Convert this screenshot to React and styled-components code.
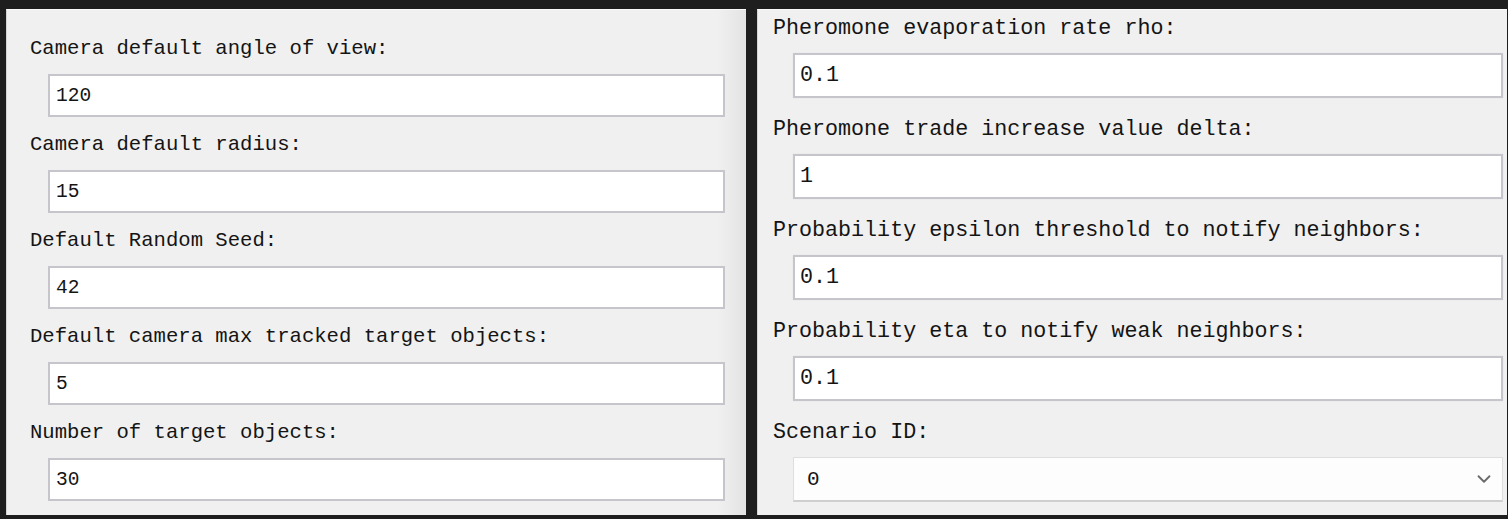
import styled, { createGlobalStyle } from "styled-components";
import { ChevronDown } from "lucide-react";

const GlobalStyle = createGlobalStyle`
  html, body {
    margin: 0;
    padding: 0;
    background: #1e1e1e;
  }
  * { box-sizing: border-box; }
`;

const Screen = styled.div`
  width: 1508px;
  height: 519px;
  display: flex;
  gap: 11px;
  padding: 9px 1px 4px 6px;
  background: #1e1e1e;
  overflow: hidden;
`;

const Panel = styled.div`
  width: ${(p) => p.$width}px;
  display: flex;
  flex-direction: column;
  gap: ${(p) => p.$gap}px;
  padding: ${(p) => p.$pad};
  background: ${(p) =>
    p.$shade
      ? "linear-gradient(to right, #f0f0f0 calc(100% - 28px), #e3e3e3)"
      : "#f0f0f0"};
  border-left: 1px solid #d4d4d4;
  border-top: 1px solid #fafafa;
  font-family: "Liberation Mono", "DejaVu Sans Mono", monospace;
  color: #141414;
`;

const Field = styled.div`
  display: flex;
  flex-direction: column;
`;

const Label = styled.div`
  font-size: ${(p) => p.$size}px;
  line-height: ${(p) => p.$lh}px;
  height: ${(p) => p.$lh}px;
  white-space: pre;
`;

const Input = styled.input`
  display: block;
  width: ${(p) => p.$width}px;
  height: ${(p) => p.$height}px;
  margin: ${(p) => p.$mt}px 0 0 ${(p) => p.$ml}px;
  padding: 0 0 0 ${(p) => p.$padx}px;
  border: 2px solid #c5c5cb;
  background: #ffffff;
  font-family: "Liberation Mono", "DejaVu Sans Mono", monospace;
  font-size: ${(p) => p.$size}px;
  color: #141414;
  outline: none;
  box-shadow: ${(p) => (p.$soft ? "0 0 1px #d8d8dc" : "none")};
`;

const SelectBox = styled.div`
  width: 710px;
  height: 45px;
  margin: 10px 0 0 20px;
  padding: 0 7px 0 13px;
  display: flex;
  align-items: center;
  justify-content: space-between;
  background: #fdfdfd;
  border: 1px solid #dedede;
  border-bottom: 2px solid #cfcfcf;
  font-size: 21px;
  color: #141414;
  svg {
    color: #6a6a6a;
  }
`;

const leftFields = [
  ["Camera default angle of view:", "120"],
  ["Camera default radius:", "15"],
  ["Default Random Seed:", "42"],
  ["Default camera max tracked target objects:", "5"],
  ["Number of target objects:", "30"],
];

const rightFields = [
  ["Pheromone evaporation rate rho:", "0.1"],
  ["Pheromone trade increase value delta:", "1"],
  ["Probability epsilon threshold to notify neighbors:", "0.1"],
  ["Probability eta to notify weak neighbors:", "0.1"],
];

export default function App() {
  return (
    <>
      <GlobalStyle />
      <Screen>
        <Panel $width={740} $gap={15} $pad="26px 0 0 23px" $shade>
          {leftFields.map(([label, value]) => (
            <Field key={label}>
              <Label $size={20.6} $lh={26}>{label}</Label>
              <Input
                readOnly
                value={value}
                $width={677}
                $height={43}
                $mt={12}
                $ml={18}
                $padx={6}
                $size={19.5}
              />
            </Field>
          ))}
        </Panel>
        <Panel $width={750} $gap={18} $pad="5px 0 0 15px">
          {rightFields.map(([label, value]) => (
            <Field key={label}>
              <Label $size={21.7} $lh={28}>{label}</Label>
              <Input
                readOnly
                value={value}
                $width={710}
                $height={45}
                $mt={10}
                $ml={20}
                $padx={5}
                $size={21.7}
                $soft
              />
            </Field>
          ))}
          <Field>
            <Label $size={21.7} $lh={28}>Scenario ID:</Label>
            <SelectBox>
              <span>0</span>
              <ChevronDown size={22} strokeWidth={2} />
            </SelectBox>
          </Field>
        </Panel>
      </Screen>
    </>
  );
}
